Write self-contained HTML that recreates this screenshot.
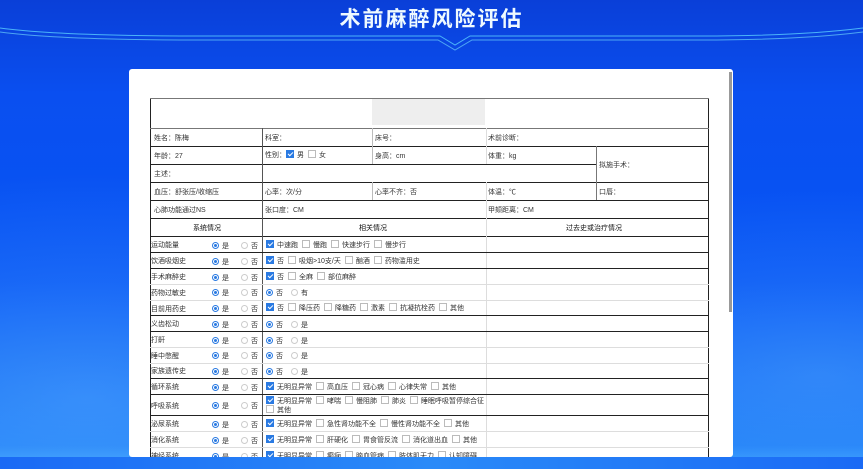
<!DOCTYPE html>
<html><head><meta charset="utf-8"><style>
*{margin:0;padding:0;box-sizing:border-box}
body{width:863px;height:469px;overflow:hidden;position:relative;font-family:"Liberation Sans","Noto Sans CJK SC",sans-serif;font-size:7px;color:#333;
background:linear-gradient(180deg,#0a3fd8 0%,#0a4ff0 20%,#0655f5 60%,#1a7af8 95%,#3aa0ff 100%);}
.bgl{position:absolute;left:0;top:0;width:863px;height:469px;background:radial-gradient(ellipse at 10% 85%,rgba(120,200,255,.35),transparent 40%),radial-gradient(ellipse at 95% 80%,rgba(120,200,255,.3),transparent 35%)}
.title{position:absolute;left:0;width:863px;top:3px;text-align:center;color:#eefaff;font-size:21px;font-weight:bold;letter-spacing:2px;font-family:"Noto Sans CJK SC",sans-serif}
.card{position:absolute;left:129px;top:69px;width:604px;height:388px;background:#fff;border-radius:3px;overflow:hidden}
.sb{position:absolute;left:729px;top:72px;width:3px;height:240px;background:#999}
.t{position:absolute;left:150px;width:559px;border-left:1px solid #222;border-right:1px solid #222}
.h{position:absolute;left:150px;width:559px;height:0;border-top:1px solid #222}
.hl{border-top-color:#ddd}
.hg{border-top-color:#777}
.v{position:absolute;width:0;border-left:1px solid #555}
.tx{position:absolute;white-space:nowrap;font-size:7px;color:#333}
.r{display:inline-block;width:7px;height:7px;border-radius:50%;border:1px solid #2a7ae2;vertical-align:-1px;margin-right:3px;position:relative}
.r.on::after{content:"";position:absolute;left:1px;top:1px;width:3px;height:3px;border-radius:50%;background:#2a7ae2}
.r.off{border-color:#ccc}
.c{display:inline-block;width:8px;height:8px;border:1px solid #bbb;vertical-align:-1px;margin-right:3px;margin-left:4px;background:#fff}
.c.on{background:#2a7ae2;border-color:#2a7ae2;position:relative}
.c.on::after{content:"";position:absolute;left:2px;top:0px;width:2px;height:4px;border:solid #fff;border-width:0 1px 1px 0;transform:rotate(45deg)}
</style></head><body>
<div class="bgl"></div>
<svg style="position:absolute;left:0;top:0" width="863" height="70"><path d="M0 28 Q60 36 200 36 L440 36 L455 45 L470 36 L700 36 Q800 36 863 28" fill="none" stroke="#5ad0ff" stroke-width="1" opacity=".8"/><path d="M0 32 Q60 40 200 40 L438 40 L455 50 L472 40 L700 40 Q800 40 863 32" fill="none" stroke="#7ae8ff" stroke-width="1" opacity=".6"/></svg>
<div class="title">术前麻醉风险评估</div>
<div class="card"></div>
<div class="sb"></div>
<div class="t" style="top:98px;height:371px"></div>
<div class="h hg" style="top:98px"></div>
<div style="position:absolute;left:372px;top:99px;width:113px;height:26px;background:#eee"></div>
<div class="h hg" style="top:128px"></div>
<div class="h" style="top:146px"></div>
<div class="h" style="top:164px;width:446px"></div>
<div class="h" style="top:182px"></div>
<div class="h" style="top:200px"></div>
<div class="h" style="top:218px"></div>
<div class="h" style="top:236px"></div>
<div class="v" style="left:262px;top:128px;height:341px"></div>
<div class="v" style="left:372px;top:128px;height:18px;border-color:#bbb"></div>
<div class="v" style="left:372px;top:146px;height:18px;border-color:#bbb"></div>
<div class="v" style="left:372px;top:182px;height:18px;border-color:#bbb"></div>
<div class="v" style="left:486px;top:128px;height:36px;border-color:#ddd"></div>
<div class="v" style="left:486px;top:182px;height:287px;border-color:#ddd"></div>
<div class="v" style="left:596px;top:146px;height:54px;border-color:#777"></div>
<div class="tx" style="left:154px;top:133px">姓名：陈梅</div>
<div class="tx" style="left:265px;top:133px">科室：</div>
<div class="tx" style="left:375px;top:133px">床号：</div>
<div class="tx" style="left:488px;top:133px">术前诊断：</div>
<div class="tx" style="left:154px;top:151px">年龄：27</div>
<div class="tx" style="left:265px;top:150px">性别：<span class="c on" style="margin-left:0"></span>男<span class="c"></span>女</div>
<div class="tx" style="left:375px;top:151px">身高：cm</div>
<div class="tx" style="left:488px;top:151px">体重：kg</div>
<div class="tx" style="left:599px;top:160px">拟施手术：</div>
<div class="tx" style="left:154px;top:169px">主述：</div>
<div class="tx" style="left:154px;top:187px">血压：舒张压/收缩压</div>
<div class="tx" style="left:265px;top:187px">心率：次/分</div>
<div class="tx" style="left:375px;top:187px">心率不齐：否</div>
<div class="tx" style="left:488px;top:187px">体温：℃</div>
<div class="tx" style="left:599px;top:187px">口唇：</div>
<div class="tx" style="left:154px;top:205px">心肺功能通过NS</div>
<div class="tx" style="left:265px;top:205px">张口度：CM</div>
<div class="tx" style="left:488px;top:205px">甲颏距离：CM</div>
<div class="tx" style="left:193px;top:223px;color:#111">系统情况</div>
<div class="tx" style="left:359px;top:223px;color:#111">相关情况</div>
<div class="tx" style="left:566px;top:223px;color:#111">过去史或治疗情况</div>
<!-- data rows -->
<div class="h" style="top:252px"></div>
<div class="h" style="top:268px"></div>
<div class="h hl" style="top:284px"></div>
<div class="h hl" style="top:300px"></div>
<div class="h" style="top:315px"></div>
<div class="h" style="top:331px"></div>
<div class="h hl" style="top:347px"></div>
<div class="h hl" style="top:363px"></div>
<div class="h" style="top:378px"></div>
<div class="h" style="top:394px"></div>
<div class="h" style="top:415px"></div>
<div class="h hl" style="top:431px"></div>
<div class="h hl" style="top:447px"></div>

<div class="tx" style="left:151px;top:240px">运动能量</div>
<div class="tx" style="left:151px;top:256px">饮酒吸烟史</div>
<div class="tx" style="left:151px;top:272px">手术麻醉史</div>
<div class="tx" style="left:151px;top:288px">药物过敏史</div>
<div class="tx" style="left:151px;top:304px">目前用药史</div>
<div class="tx" style="left:151px;top:319px">义齿松动</div>
<div class="tx" style="left:151px;top:335px">打鼾</div>
<div class="tx" style="left:151px;top:351px">睡中憋醒</div>
<div class="tx" style="left:151px;top:366px">家族遗传史</div>
<div class="tx" style="left:151px;top:382px">循环系统</div>
<div class="tx" style="left:151px;top:401px">呼吸系统</div>
<div class="tx" style="left:151px;top:419px">泌尿系统</div>
<div class="tx" style="left:151px;top:435px">消化系统</div>
<div class="tx" style="left:151px;top:451px">神经系统</div>

<div class="tx" style="left:212px;top:241px"><span class="r on"></span>是 <span class="r off" style="margin-left:10px"></span>否</div>
<div class="tx" style="left:212px;top:257px"><span class="r on"></span>是 <span class="r off" style="margin-left:10px"></span>否</div>
<div class="tx" style="left:212px;top:273px"><span class="r on"></span>是 <span class="r off" style="margin-left:10px"></span>否</div>
<div class="tx" style="left:212px;top:288px"><span class="r on"></span>是 <span class="r off" style="margin-left:10px"></span>否</div>
<div class="tx" style="left:212px;top:304px"><span class="r on"></span>是 <span class="r off" style="margin-left:10px"></span>否</div>
<div class="tx" style="left:212px;top:320px"><span class="r on"></span>是 <span class="r off" style="margin-left:10px"></span>否</div>
<div class="tx" style="left:212px;top:336px"><span class="r on"></span>是 <span class="r off" style="margin-left:10px"></span>否</div>
<div class="tx" style="left:212px;top:351px"><span class="r on"></span>是 <span class="r off" style="margin-left:10px"></span>否</div>
<div class="tx" style="left:212px;top:367px"><span class="r on"></span>是 <span class="r off" style="margin-left:10px"></span>否</div>
<div class="tx" style="left:212px;top:383px"><span class="r on"></span>是 <span class="r off" style="margin-left:10px"></span>否</div>
<div class="tx" style="left:212px;top:401px"><span class="r on"></span>是 <span class="r off" style="margin-left:10px"></span>否</div>
<div class="tx" style="left:212px;top:420px"><span class="r on"></span>是 <span class="r off" style="margin-left:10px"></span>否</div>
<div class="tx" style="left:212px;top:436px"><span class="r on"></span>是 <span class="r off" style="margin-left:10px"></span>否</div>
<div class="tx" style="left:212px;top:452px"><span class="r on"></span>是 <span class="r off" style="margin-left:10px"></span>否</div>

<div class="tx" style="left:262px;top:240px"><span class="c on"></span>中速跑<span class="c"></span>慢跑<span class="c"></span>快速步行<span class="c"></span>慢步行</div>
<div class="tx" style="left:262px;top:256px"><span class="c on"></span>否<span class="c"></span>吸烟&gt;10支/天<span class="c"></span>酗酒<span class="c"></span>药物滥用史</div>
<div class="tx" style="left:262px;top:272px"><span class="c on"></span>否<span class="c"></span>全麻<span class="c"></span>部位麻醉</div>
<div class="tx" style="left:266px;top:288px"><span class="r on"></span>否 <span class="r off" style="margin-left:6px"></span>有</div>
<div class="tx" style="left:262px;top:303px"><span class="c on"></span>否<span class="c"></span>降压药<span class="c"></span>降糖药<span class="c"></span>激素<span class="c"></span>抗凝抗栓药<span class="c"></span>其他</div>
<div class="tx" style="left:266px;top:320px"><span class="r on"></span>否 <span class="r off" style="margin-left:6px"></span>是</div>
<div class="tx" style="left:266px;top:336px"><span class="r on"></span>否 <span class="r off" style="margin-left:6px"></span>是</div>
<div class="tx" style="left:266px;top:351px"><span class="r on"></span>否 <span class="r off" style="margin-left:6px"></span>是</div>
<div class="tx" style="left:266px;top:367px"><span class="r on"></span>否 <span class="r off" style="margin-left:6px"></span>是</div>
<div class="tx" style="left:262px;top:382px"><span class="c on"></span>无明显异常<span class="c"></span>高血压<span class="c"></span>冠心病<span class="c"></span>心律失常<span class="c"></span>其他</div>
<div class="tx" style="left:262px;top:396px"><span class="c on"></span>无明显异常<span class="c"></span>哮喘<span class="c"></span>慢阻肺<span class="c"></span>肺炎<span class="c"></span>睡眠呼吸暂停综合征</div>
<div class="tx" style="left:262px;top:405px"><span class="c"></span>其他</div>
<div class="tx" style="left:262px;top:419px"><span class="c on"></span>无明显异常<span class="c"></span>急性肾功能不全<span class="c"></span>慢性肾功能不全<span class="c"></span>其他</div>
<div class="tx" style="left:262px;top:435px"><span class="c on"></span>无明显异常<span class="c"></span>肝硬化<span class="c"></span>胃食管反流<span class="c"></span>消化道出血<span class="c"></span>其他</div>
<div class="tx" style="left:262px;top:451px"><span class="c on"></span>无明显异常<span class="c"></span>癫痫<span class="c"></span>脑血管病<span class="c"></span>肢体肌无力<span class="c"></span>认知障碍</div>
<div style="position:absolute;left:0;top:457px;width:863px;height:12px;background:linear-gradient(90deg,#1a6af5,#2a8af8,#1a6af5)"></div>
</body></html>
